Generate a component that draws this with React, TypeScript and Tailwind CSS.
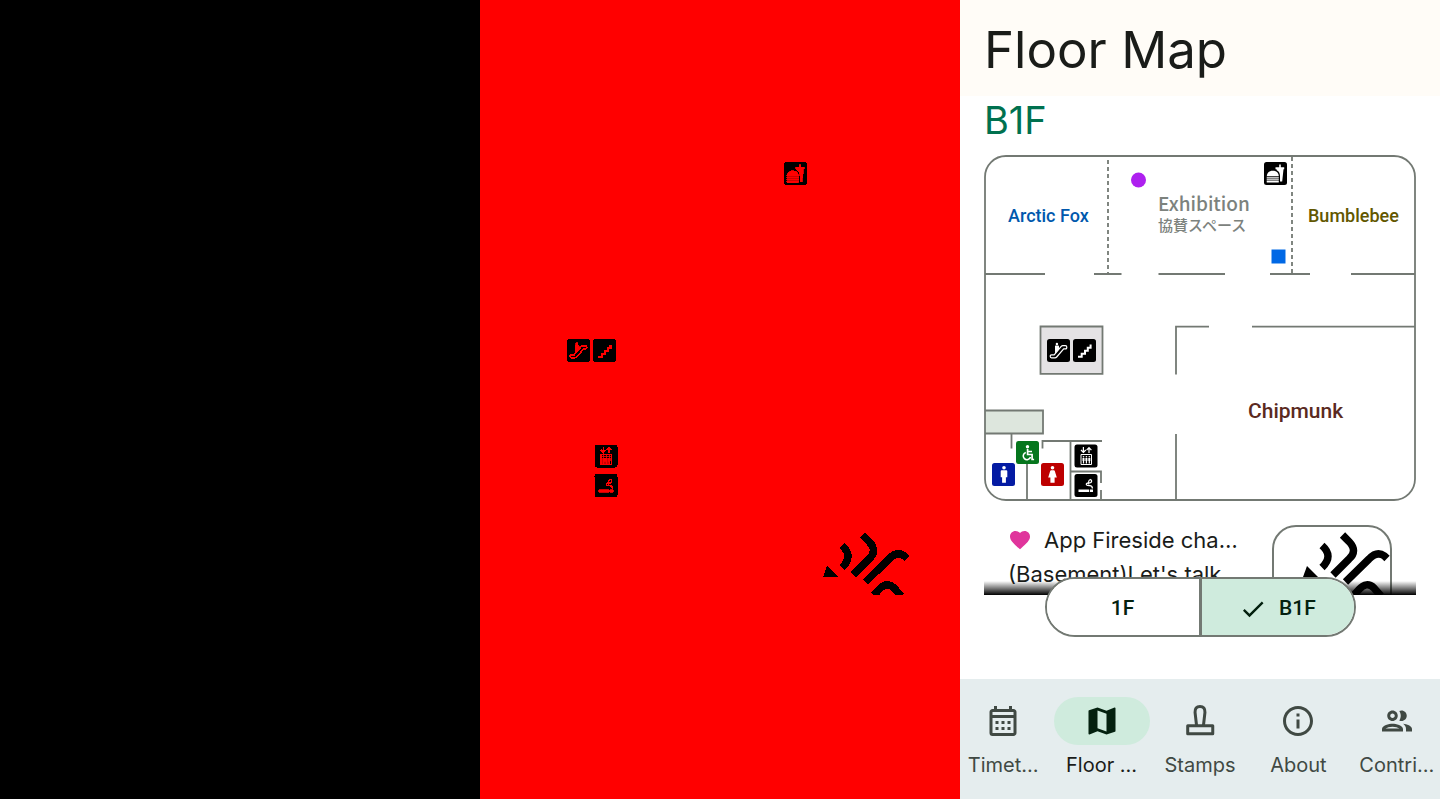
import { useState } from "react";
import type { ReactNode } from "react";
import {
  MdCheck,
  MdFavorite,
  MdInfoOutline,
  MdMap,
  MdOutlineCalendarMonth,
  MdOutlineGroup,
} from "react-icons/md";

type SignProps = { x: number; y: number; fill: string; ink: string; spread?: number; children: ReactNode };

function Sign({ x, y, fill, ink, spread = 0, children }: SignProps) {
  return (
    <g transform={`translate(${x} ${y})`} fill={ink} stroke={ink} strokeWidth={spread}>
      <rect width="23" height="23" rx="2.500" fill={fill} stroke="none" />
      {children}
    </g>
  );
}

function BlackSigns({ ink, spread = 0 }: { ink: string; spread?: number }) {
  const sign = { fill: "#000", ink, spread };
  return (
    <>
      <Sign x={280} y={7} {...sign}>
        <path d="M2.700 14.200C3 10.500 5.500 8.800 8.800 8.800S14.500 10.500 14.800 14.200z" />
        <path d="M2.700 15.200h12.100v1.200H2.700zM2.700 17.200h12.100v1.200H2.700zM2.700 19h12.100v1q0 .5-.5.5H3.200q-.5 0-.5-.5z" />
        <path d="M11.500 5.200h3.700V2.500h1.600v2.700H20.200v2h-.7L18.200 19.500h-2.200v-5.300c0-3-1-4.700-3.200-6L12.500 7.200h-1z" />
      </Sign>
      <Sign x={63} y={184} {...sign}>
        <path
          d="M4.500 18.800q-1.300 0-1.300-1.500T4.500 15.800h2.700l7-8.300q.6-.8 1.600-.8h2.600q1.400 0 1.400 1.600T18.400 9.900h-1.700l-7 8.100q-.7.800-1.700.8z"
          fill="none"
          stroke={ink}
          strokeWidth={1.200 + spread / 2}
        />
        <circle cx="9.900" cy="5" r="1.200" />
        <path d="M8 7q0-.6.600-.6h2.700q.7 0 .7.600v3.200l-3.400 3.800H8z" />
      </Sign>
      <Sign x={89} y={184} {...sign}>
        <path d="M5 17.800h3.700v-3H12v-3h2.800v-3h2.800V5.600" fill="none" stroke={ink} strokeWidth={2 + spread / 2} />
      </Sign>
      <Sign x={90.500} y={289.500} {...sign}>
        <path d="M6.500 10h10.500v10H6.500z" fill="none" stroke={ink} strokeWidth={1 + spread / 2} />
        <path d="M8 13.500h2v3h-.4v2.500H8.400v-2.500H8zM10.900 13.500h2v3h-.4v2.500h-1.200v-2.500h-.4zM13.800 13.500h2v3h-.4v2.500h-1.200v-2.500h-.4z" />
        <circle cx="9" cy="12.200" r=".8" />
        <circle cx="11.900" cy="12.200" r=".8" />
        <circle cx="14.800" cy="12.200" r=".8" />
        <path d="M8.900 2.500v5.400M6.500 5.500l2.400 2.500 2.400-2.500M14.500 8.500V3.200M12.100 5.600l2.400-2.500 2.400 2.500" fill="none" stroke={ink} strokeWidth={1.200 + spread / 2} />
      </Sign>
      <Sign x={90.500} y={319} {...sign}>
        <path d="M4 15.600h10.500v2.500H4zM15.300 15.600h3.200v2.500h-3.200z" />
        <path d="M17.900 14.500c0-2.300-1-2.900-2.600-2.900-2.400.2-4-.5-3.300-2 .7-1.200 2.700-.6 4-.9 1.400-.4 1.700-2.800-.3-3.400" fill="none" stroke={ink} strokeWidth={1.300 + spread / 2} />
        <path d="M14.400 10.500q-1.200-4 1.600-5" fill="none" stroke={ink} strokeWidth={1.100 + spread / 2} />
      </Sign>
    </>
  );
}

function Waves() {
  return (
    <>
      <path d="M35 41L31 52h15z" fill="#000" />
      <g fill="none" stroke="#000" strokeWidth="7.500">
        <path d="M50 20.500Q62 31 50 42.500" />
        <path d="M70.500 10L77 16.500Q86 26 77 34L61 50" />
        <path d="M73.500 57L97 34Q105 25.500 112.500 31L115 33.500" />
        <path d="M82 70L87 64.500Q94.500 56 102 63L109 71" />
      </g>
    </>
  );
}

function SignLayer() {
  return (
    <svg viewBox="0 0 480 799" className="block w-full" shapeRendering="crispEdges" aria-hidden="true">
      <g transform="translate(24 155)">
        <BlackSigns ink="#f00" spread={0.8} />
      </g>
      <svg x="312" y="525" width="120" height="70">
        <Waves />
      </svg>
    </svg>
  );
}

function BasementMap() {
  return (
    <svg viewBox="0 0 432 346" className="block w-full" role="img" aria-label="B1F map">
      <rect x="1" y="1" width="430" height="344" rx="21" fill="#fff" />
      <rect x="56.500" y="171.500" width="62" height="47" fill="#e4e2e4" />
      <path d="M1 255.500h57.500v23H1z" fill="#dde6dd" />
      <g fill="none" stroke="#737973" strokeWidth="1.800">
        <path d="M1 119H61M110 119h27.500M174.500 119H241M286 119h40M367 119h64" />
        <path d="M225 171.700H192V219.500M268 171.700H431M192 279v66" />
        <path d="M56.500 171.500h62v47.300h-62zM1 255.500h58v23H1M27.500 279v14.500M58.500 293.500V286H118M86.500 286v59M43 305v40M87 316.500h30V328M117 335v10" />
        <path d="M124 5v113M308 2v116" strokeDasharray="4 3" />
        <rect x="1" y="1" width="430" height="344" rx="21" />
      </g>
      <circle cx="154.500" cy="25" r="7.500" fill="#ae20ef" />
      <path d="M287.500 94.500h14v14h-14z" fill="#0068e5" />
      <BlackSigns ink="#fff" />
      <Sign x={32} y={286} fill="#05761d" ink="#fff">
        <circle cx="11.500" cy="5.800" r="1.700" />
        <path d="M11.600 8v5.500h4.500v5h2M12 10.500h4" fill="none" stroke="#fff" strokeWidth="1.700" />
        <path d="M9.800 11.500A3.700 3.700 0 1 0 14.500 16" fill="none" stroke="#fff" strokeWidth="1.600" />
      </Sign>
      <Sign x={8} y={308} fill="#041ba3" ink="#fff">
        <circle cx="12" cy="4.700" r="1.800" />
        <path d="M9.700 7.200h4.600q1 0 1 1v6h-1.400v5.600h-3.800v-5.600H8.700v-6q0-1 1-1z" />
      </Sign>
      <Sign x={57} y={308} fill="#bd0000" ink="#fff">
        <circle cx="11.500" cy="4.700" r="1.800" />
        <path d="M10.200 7.200h2.600q.8 0 1 .8l2 6.500h-2.200v5.300H9.400v-5.300H7.200L9.200 8q.2-.8 1-.8z" />
      </Sign>
      <g className="font-['Roboto',sans-serif] font-medium">
        <text x="24" y="67" fontSize="18" fill="#0058ad">Arctic Fox</text>
        <text x="324" y="67" fontSize="18" fill="#625700">Bumblebee</text>
        <text x="264" y="263" fontSize="21" fill="#5b2a1f">Chipmunk</text>
      </g>
      <g className="font-['Noto_Sans_CJK_JP',sans-serif] font-medium" fill="#7c827d">
        <text x="174" y="56" fontSize="19">Exhibition</text>
        <text x="174" y="76" fontSize="15">協賛スペース</text>
      </g>
    </svg>
  );
}

function StampIcon() {
  return (
    <svg viewBox="0 0 24 24" className="size-9" fill="none" stroke="currentColor" strokeWidth="2" strokeLinejoin="round" aria-hidden="true">
      <path d="M9.700 15L8.700 6.300Q8.500 2.300 12 2.300t3.300 4L14.300 15" />
      <path d="M3.800 15.200h16.700v5.300H3.800z" />
    </svg>
  );
}

const tabs = [
  { label: "Timet…", icon: <MdOutlineCalendarMonth className="size-9" /> },
  { label: "Floor …", icon: <MdMap className="size-9" />, active: true },
  { label: "Stamps", icon: <StampIcon /> },
  { label: "About", icon: <MdInfoOutline className="size-9" /> },
  { label: "Contri…", icon: <MdOutlineGroup className="size-9" /> },
];

export default function App() {
  const [floor, setFloor] = useState("B1F");
  const segment = "flex flex-1 items-center justify-center gap-3 pt-1 text-[#04210f]";

  return (
    <div className="grid h-screen grid-cols-3 overflow-hidden bg-black font-['Inter',sans-serif]">
      <div className="bg-black" />
      <div className="bg-[#ff0000]">
        <SignLayer />
      </div>
      <div className="flex min-h-0 flex-col bg-white">
        <header className="flex h-24 shrink-0 items-center bg-[#fffcf7] px-6 pt-0.5">
          <h1 className="text-[51px] leading-none text-[#1a1c19]">Floor Map</h1>
        </header>

        <main className="flex min-h-0 flex-1 flex-col px-6">
          <div className="relative min-h-0 flex-1 overflow-hidden">
            <h2 className="pt-0.5 pb-[13px] text-[38px] leading-11 text-[#00714f]">B1F</h2>
            <BasementMap />
            <article className="flex items-start justify-between px-6 pt-6">
              <div className="-mt-0.5 text-[22px] leading-[34px] whitespace-nowrap text-[#1a1c19]">
                <h3 className="flex items-center gap-3">
                  <MdFavorite className="size-6 text-[#e0359c]" />
                  App Fireside cha…
                </h3>
                <p>(Basement)Let's talk</p>
              </div>
              <div className="h-[120px] w-[120px] shrink-0 rounded-3xl border-2 border-[#737973]">
                <svg viewBox="2 2 116 116" className="block size-full overflow-hidden rounded-[22px]" aria-hidden="true">
                  <Waves />
                </svg>
              </div>
            </article>
            <div className="absolute inset-x-0 bottom-0 h-3.5 bg-linear-to-b from-transparent to-black" />
          </div>

          <div className="relative z-10 -mt-[18px] mb-[42px] flex h-15 w-[311px] shrink-0 self-center overflow-hidden rounded-full border-2 border-[#737973] bg-white font-['Roboto',sans-serif] text-[21px] font-medium">
            <button type="button" aria-pressed={floor === "1F"} onClick={() => setFloor("1F")} className={`${segment} ${floor === "1F" ? "bg-[#cfebdd]" : "bg-white"}`}>
              {floor === "1F" && <MdCheck className="size-7" />}
              1F
            </button>
            <span className="w-[3px] bg-[#737973]" />
            <button type="button" aria-pressed={floor === "B1F"} onClick={() => setFloor("B1F")} className={`${segment} ${floor === "B1F" ? "bg-[#cfebdd]" : "bg-white"}`}>
              {floor === "B1F" && <MdCheck className="size-7" />}
              B1F
            </button>
          </div>
        </main>

        <nav className="h-30 shrink-0 overflow-hidden bg-[#e5edee]">
          <ul className="-mx-1.5 grid grid-cols-5 pt-[18px]">
            {tabs.map((tab) => (
              <li key={tab.label}>
                <a href="#" aria-current={tab.active ? "page" : undefined} className="flex flex-col items-center gap-2">
                  <span className={tab.active ? "flex h-12 w-24 items-center justify-center rounded-full bg-[#cfebdd] text-[#04210f]" : "flex h-12 w-24 items-center justify-center text-[#404943]"}>
                    {tab.icon}
                  </span>
                  <span className={tab.active ? "text-xl leading-6 text-[#1a1c19]" : "text-xl leading-6 text-[#404943]"}>{tab.label}</span>
                </a>
              </li>
            ))}
          </ul>
        </nav>
      </div>
    </div>
  );
}
